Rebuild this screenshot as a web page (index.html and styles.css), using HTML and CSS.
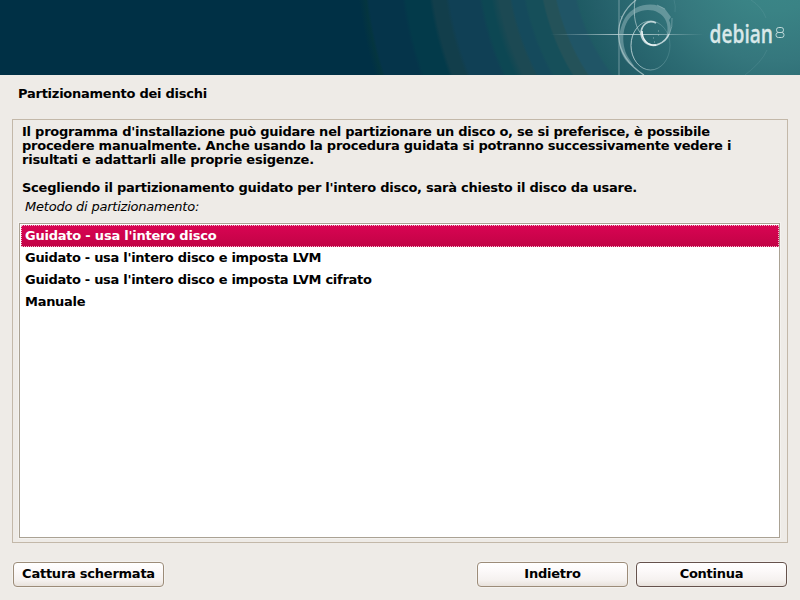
FILE: index.html
```html
<!DOCTYPE html>
<html lang="it">
<head>
<meta charset="utf-8">
<title>Partizionamento dei dischi</title>
<link rel="stylesheet" href="styles.css">
</head>
<body>
<header class="banner">
<svg class="art" viewBox="0 0 800 75" width="800" height="75">
<defs>
<linearGradient id="beam" gradientUnits="userSpaceOnUse" x1="550" y1="0" x2="704" y2="0">
<stop offset="0" stop-color="#b9cfd2" stop-opacity="0"/><stop offset=".45" stop-color="#c9dbdd" stop-opacity=".8"/><stop offset=".65" stop-color="#c9dbdd" stop-opacity=".7"/><stop offset="1" stop-color="#b9cfd2" stop-opacity="0"/>
</linearGradient>
<linearGradient id="fade" x1="0" y1="0" x2="1" y2="0"><stop offset="0" stop-color="#c0d6d9" stop-opacity=".9"/><stop offset="1" stop-color="#7fb0b4" stop-opacity=".25"/></linearGradient>
</defs>
<path d="M619 0V75" stroke="#8fb0b5" stroke-opacity=".45" stroke-width="1.6"/>
<path d="M550 34H704V35H550Z" fill="url(#beam)"/>
<g fill="none">
<path d="M636 0C612 18 611 54 644 75" stroke="#b5cdd0" stroke-opacity=".75" stroke-width="1.2"/>
<path d="M635 0C633 16 635 28 643 36" stroke="#b5cdd0" stroke-opacity=".7"/>
<ellipse cx="650.500" cy="45.500" rx="19.500" ry="24.500" stroke="url(#fade)"/>
<path d="M674 0Q676 6 675 12M745 75Q762 62 767 50M751 0Q762 7 766 18" stroke="#76a9ad" stroke-opacity=".22"/>
</g>
<path d="M632 66C617 56 616 34 625 18C634 3 655 1 665 9L671 17L669 20C673 29 670 37 664 42C668 34 669 26 665 19C660 10 647 7 636 13C622 20 620 43 628 57L634 66Z" fill="#9dbfc3" fill-opacity=".48"/>
<path d="M672 18Q673 27 669 35M657 5L665 9M622 19L621 16" stroke="#9dbfc3" stroke-opacity=".5" fill="none"/>
<path d="M656 23C648 19 641 25 641 34C642 43 651 48 659 44Q666 41 669 34" fill="none" stroke="#d5e4e6" stroke-opacity=".85" stroke-width="1.6"/>
<path d="M642 31C642 40 648 46 656 45" fill="none" stroke="#eef5f5" stroke-width="1.5"/>
<path d="M653 38h1M658 35h1M654 42h1M658 31h1" stroke="#b5cdd0" stroke-opacity=".7"/>
<text class="word" x="709.500" y="42.500" textLength="63.500" lengthAdjust="spacingAndGlyphs">debian</text>
<g fill="none" stroke="#c1dada" stroke-width="1"><rect x="776.500" y="27.500" width="7" height="5" rx="2.300"/><rect x="776" y="32.500" width="8" height="5" rx="2.300"/></g>
</svg>
</header>
<main class="page">
<h1 class="title">Partizionamento dei dischi</h1>
<section class="frame">
<div class="intro">
<p>Il programma d'installazione può guidare nel partizionare un disco o, se si preferisce, è possibile<br>procedere manualmente. Anche usando la procedura guidata si potranno successivamente vedere i<br>risultati e adattarli alle proprie esigenze.</p>
<p class="gap">Scegliendo il partizionamento guidato per l'intero disco, sarà chiesto il disco da usare.</p>
</div>
<p class="label">Metodo di partizionamento:</p>
<ul class="list">
<li class="selected">Guidato - usa l'intero disco</li>
<li>Guidato - usa l'intero disco e imposta LVM</li>
<li>Guidato - usa l'intero disco e imposta LVM cifrato</li>
<li>Manuale</li>
</ul>
</section>
<footer class="actions">
<button class="btn">Cattura schermata</button>
<span class="spacer"></span>
<button class="btn">Indietro</button>
<button class="btn default">Continua</button>
</footer>
</main>
</body>
</html>
```
FILE: styles.css
```css
* { box-sizing: border-box; }
body { margin: 0; width: 800px; height: 600px; overflow: hidden; background: #eeebe7; color: #000; font: bold 13px/14px "DejaVu Sans", sans-serif; letter-spacing: -.245px; }
svg { display: block; }
p, h1, ul { margin: 0; padding: 0; }
.banner {
  height: 75px;
  background: radial-gradient(circle at 775px -49px, #3b898a 0, #3a8385 60px, #35777d 110px, #2b6a72 150px, #245f69 185px, #1f5b64 203px, #205566 206px, #205566 223px, #245259 225px, #245259 236px, #164f5a 238px, #164f5a 253px, #154a5c 256px, #154a5c 267px, #1c4953 270px, #1c4953 280px, #0d4753 288px, #0d4753 296px, #104055 300px, #104055 329px, #123e4b 333px, #123e4b 345px, #033a4a 349px, #033a4a 372px, #05344a 376px, #05344a 409px, #04353f 412px, #003045 419px);
}
.word { font: 600 25px "Open Sans", sans-serif; fill: #d9e8e9; stroke: #d9e8e9; stroke-width: .3px; letter-spacing: 0; }
.page { display: flex; flex-direction: column; height: 525px; padding: 12px; }
.title { font: inherit; padding-left: 6px; height: 32px; }
.frame { height: 424px; border: 1px solid #c3b8a9; padding: 5px 7px 4px 6px; display: flex; flex-direction: column; }
.intro { padding-left: 3px; white-space: nowrap; }
.gap { padding-top: 14px; }
.label { font-weight: normal; font-style: italic; letter-spacing: -.22px; height: 28px; padding: 5px 0 0 6px; }
.list { flex: 1; list-style: none; background: #fff; border: 1px solid #aaa294; box-shadow: 0 0 0 1px #f4f2ef; padding: 1px 0 1px 1px; letter-spacing: -.29px; }
.list li { height: 22px; padding: 4px 0 0 4px; }
.list .selected { color: #fff; background: linear-gradient(#d90453, #c10345); outline: 1px dotted #f3b8cd; outline-offset: -1px; letter-spacing: -.22px; }
.actions { display: flex; gap: 8px; padding: 19px 1px 0; }
.btn { width: 151px; height: 25px; padding: 0 0 1px; border: 1px solid #9c8c79; border-radius: 4px; background: linear-gradient(#fff, #fcf9f9 35%, #f5f1ef 75%, #e8e2dc); box-shadow: 0 0 0 1px #f4f2ef; font: inherit; letter-spacing: inherit; color: #000; }
.default { border-color: #65524c; }
.spacer { flex: 1; }
```
